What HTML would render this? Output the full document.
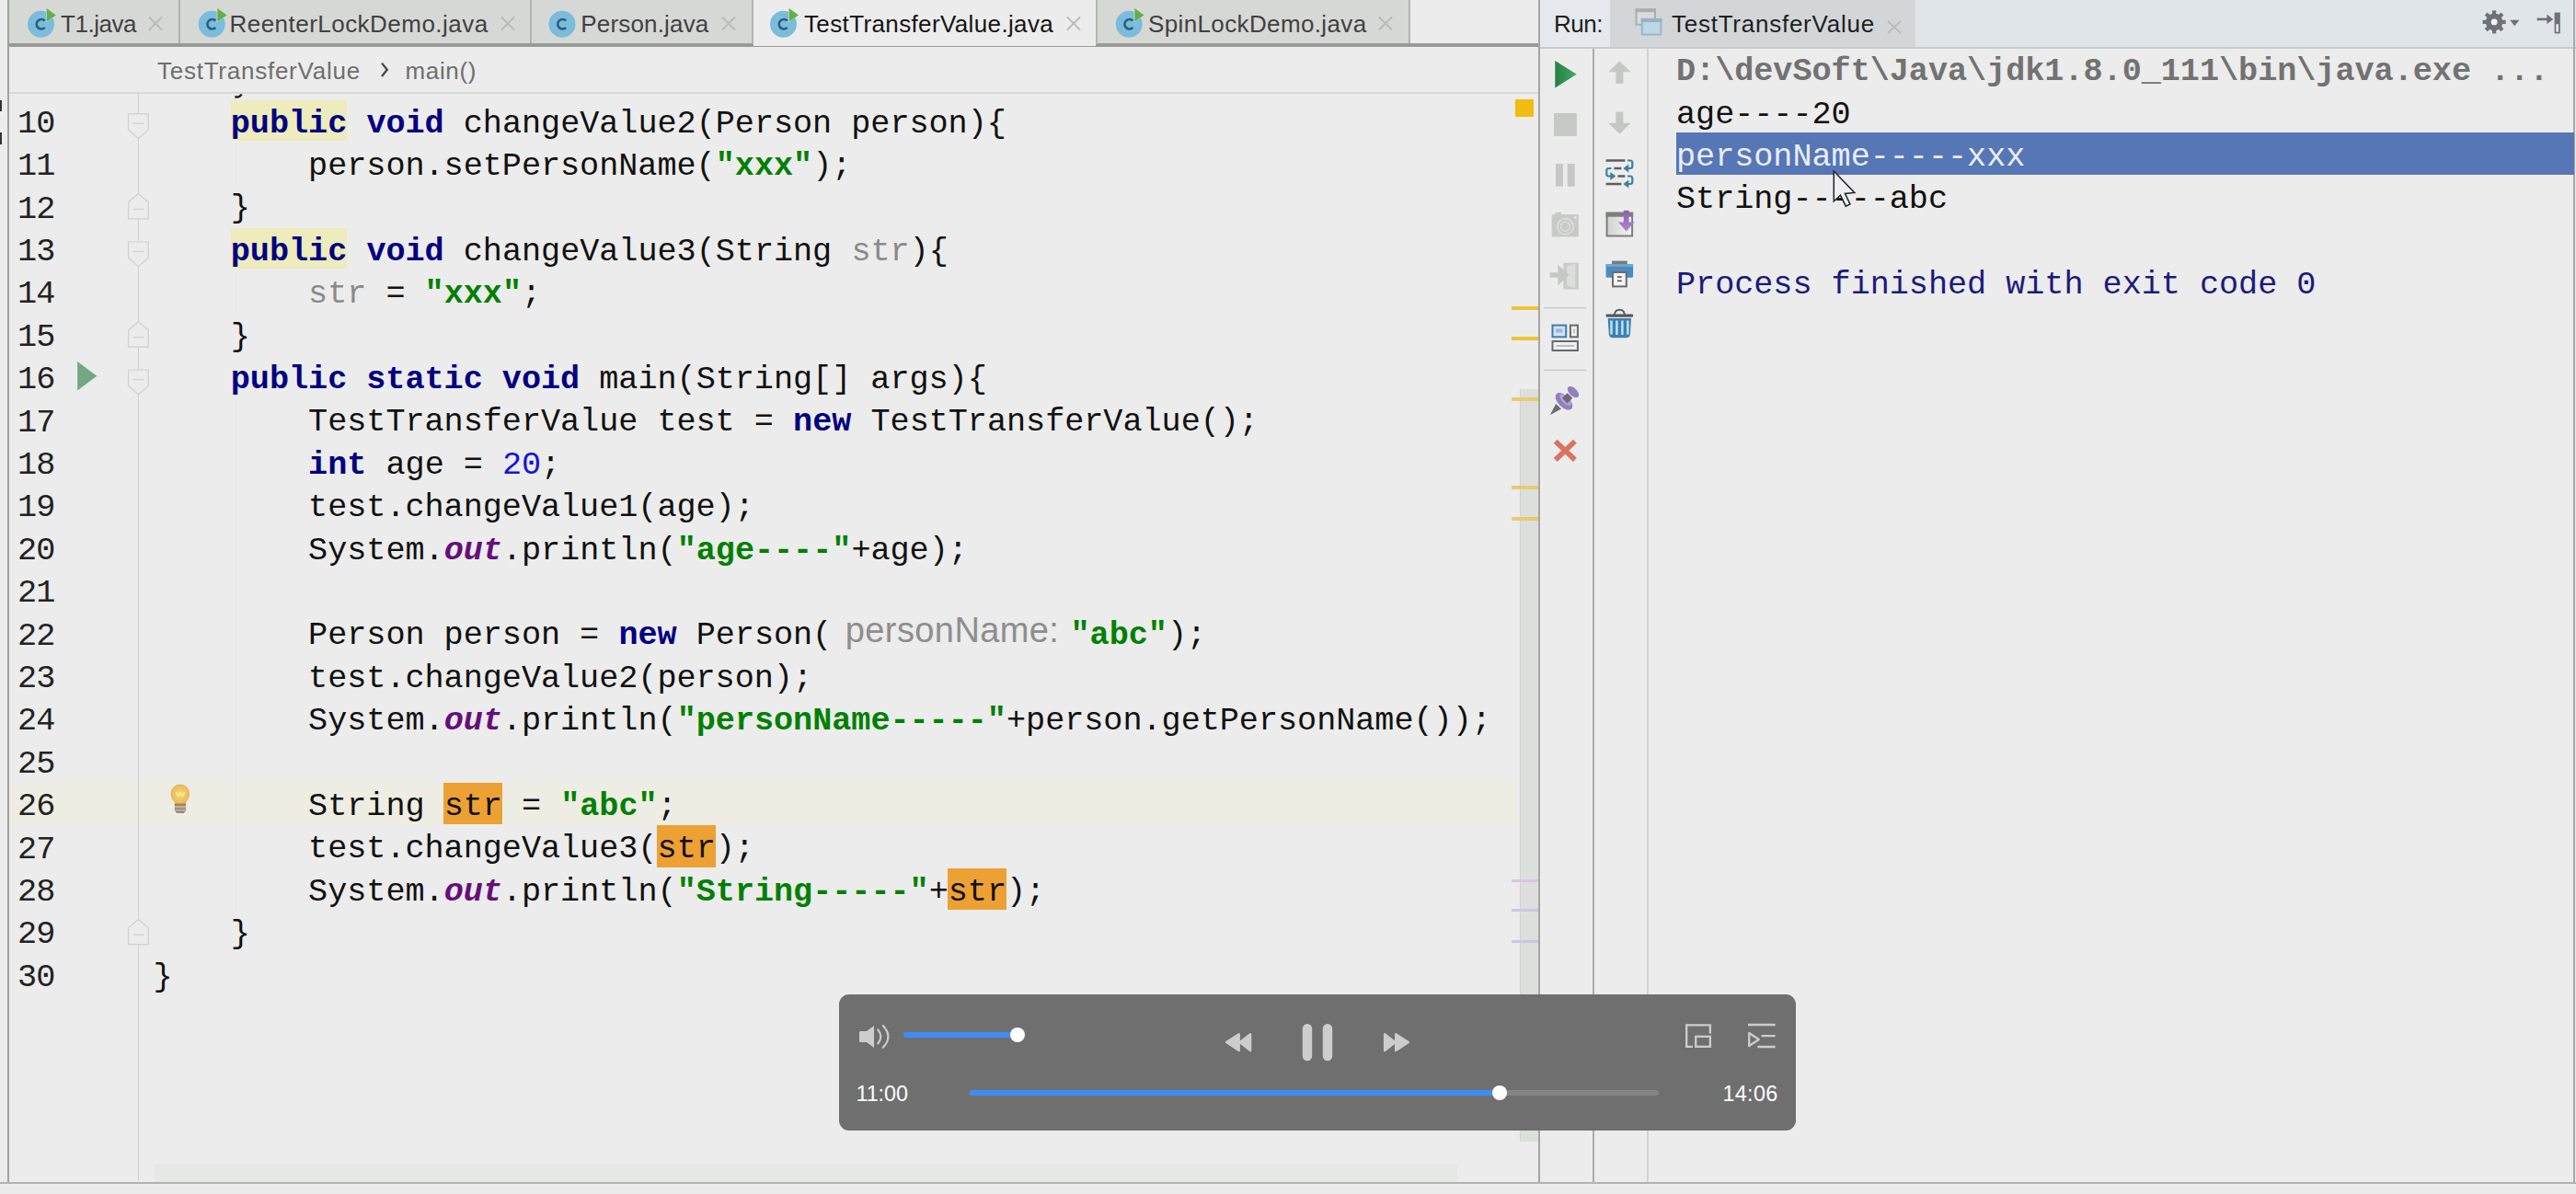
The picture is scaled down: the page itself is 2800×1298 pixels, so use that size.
<!DOCTYPE html>
<html><head><meta charset="utf-8"><title>TestTransferValue</title>
<style>
html,body{margin:0;padding:0;}
body{width:2800px;height:1298px;overflow:hidden;background:#ececec;position:relative;font-family:"Liberation Sans",sans-serif;}
.abs{position:absolute;}
.m{position:absolute;font-family:"Liberation Mono",monospace;font-size:35.2px;letter-spacing:-0.044px;white-space:pre;line-height:46.4px;height:46.4px;color:#111;}
.k{color:#000080;font-weight:bold;}
.s{color:#008000;font-weight:bold;}
.n{color:#1414d8;}
.f{color:#660e7a;font-weight:bold;font-style:italic;}
.u{color:#8a8a8a;}
.ui{font-family:"Liberation Sans",sans-serif;white-space:pre;position:absolute;}
</style></head><body>
<!-- ===== editor tab bar ===== -->
<div class="abs" style="left:10px;top:0;width:1663px;height:47px;background:#ececec;"></div>
<div class="abs" style="left:10px;top:0;width:807px;height:47px;background:#d6d8d6;"></div>
<div class="abs" style="left:1192px;top:0;width:340px;height:47px;background:#d6d8d6;"></div>
<!-- thick bottom border of tab bar -->
<div class="abs" style="left:10px;top:47px;width:1663px;height:4.300px;background:#989b98;"></div>
<!-- active tab cut -->
<div class="abs" style="left:819px;top:0;width:372px;height:49.5px;background:#ececec;"></div>
<div class="abs" style="left:817px;top:0;width:2px;height:48px;background:#b4b5b4;"></div>
<div class="abs" style="left:1191px;top:0;width:2px;height:48px;background:#b4b5b4;"></div>
<!-- tab separators -->
<div class="abs" style="left:193.5px;top:0;width:2px;height:47px;background:#b0b1b0;"></div>
<div class="abs" style="left:575.5px;top:0;width:2px;height:47px;background:#b0b1b0;"></div>
<div class="abs" style="left:1531px;top:0;width:2px;height:47px;background:#b0b1b0;"></div>
<!-- left window edge -->
<div class="abs" style="left:8px;top:0;width:2px;height:1286px;background:#a2a2a2;"></div>
<div class="abs" style="left:0;top:109px;width:2px;height:12px;background:#333;"></div>
<div class="abs" style="left:0;top:144px;width:2px;height:13px;background:#333;"></div>

<!-- tab labels -->
<div class="ui tabt" id="t1" style="left:66px;top:8.500px;font-size:26px;line-height:34px;color:#424040;letter-spacing:-0.450px;">T1.java</div>
<div class="ui tabt" id="t2" style="left:249.500px;top:8.500px;font-size:26px;line-height:34px;color:#424040;letter-spacing:0.470px;">ReenterLockDemo.java</div>
<div class="ui tabt" id="t3" style="left:631.300px;top:8.500px;font-size:26px;line-height:34px;color:#424040;letter-spacing:0.170px;">Person.java</div>
<div class="ui tabt" id="t4" style="left:874px;top:8.500px;font-size:26px;line-height:34px;color:#141414;letter-spacing:0.370px;">TestTransferValue.java</div>
<div class="ui tabt" id="t5" style="left:1248px;top:8.500px;font-size:26px;line-height:34px;color:#424040;letter-spacing:0.370px;">SpinLockDemo.java</div>

<!-- breadcrumb -->
<div class="abs" style="left:10px;top:100px;width:1662px;height:2px;background:#d7d9d6;"></div>
<div class="ui" id="bc1" style="left:171px;top:59.500px;letter-spacing:0.750px;font-size:26px;line-height:34px;color:#6e6e6e;">TestTransferValue</div>
<div class="ui" id="bc2" style="left:440.500px;top:59.500px;letter-spacing:0.660px;font-size:26px;line-height:34px;color:#6e6e6e;">main()</div>

<!-- editor right scrollbar / stripe -->
<div class="abs" style="left:1652px;top:423px;width:20px;height:818px;background:#dddfdd;border-left:1px solid #d0d2d0;box-sizing:border-box;"></div>
<div class="abs" style="left:1647px;top:108px;width:20px;height:19px;background:#f0bd10;"></div>
<div class="abs" style="left:1643px;top:332.5px;width:30px;height:4px;background:#ecc435;"></div>
<div class="abs" style="left:1643px;top:365.5px;width:30px;height:4px;background:#ecc435;"></div>
<div class="abs" style="left:1643px;top:431.5px;width:30px;height:4px;background:#e6cc6e;"></div>
<div class="abs" style="left:1643px;top:528px;width:30px;height:4px;background:#e6cc6e;"></div>
<div class="abs" style="left:1643px;top:561.5px;width:30px;height:4px;background:#e6cc6e;"></div>
<div class="abs" style="left:1643px;top:956px;width:30px;height:3px;background:#dcc4e4;"></div>
<div class="abs" style="left:1643px;top:988px;width:30px;height:3px;background:#cfc4e6;"></div>
<div class="abs" style="left:1643px;top:1022px;width:30px;height:3px;background:#cfc4e6;"></div>

<!-- horizontal scrollbar -->
<div class="abs" style="left:168px;top:1264.500px;width:1416px;height:20px;background:#e6e8e6;"></div>
<!-- bottom border -->
<div class="abs" style="left:0;top:1284.500px;width:2800px;height:2px;background:#b0b3b0;"></div>
<div class="abs" style="left:0;top:1286.500px;width:2800px;height:12px;background:#ebeceb;"></div>

<!-- ===== run panel ===== -->
<div class="abs" style="left:1674px;top:0;width:1126px;height:52px;background:#e0e5ea;"></div>
<div class="abs" style="left:1674px;top:0;width:76px;height:52px;background:#e5e9ed;"></div>
<div class="abs" style="left:1750px;top:0;width:332px;height:52px;background:#d2d6d8;"></div>
<div class="abs" style="left:1674px;top:51.200px;width:1126px;height:1.600px;background:#c9cccd;"></div>
<div class="abs" style="left:1671.500px;top:0;width:2.600px;height:1285px;background:#a3a6a3;"></div>
<div class="abs" style="left:1730.500px;top:53px;width:2.500px;height:1232px;background:#abaeab;"></div>
<div class="abs" style="left:1790px;top:53px;width:1.5px;height:1232px;background:#d2d2d2;"></div>
<div class="abs" style="left:2797.200px;top:0;width:2px;height:1285px;background:#a8a8a8;"></div>

<div class="ui" id="run" style="left:1689px;top:8.600px;letter-spacing:-0.500px;font-size:26px;line-height:34px;color:#1e1e1e;">Run:</div>
<div class="ui" id="runtab" style="left:1817px;top:9px;letter-spacing:0.750px;font-size:26px;line-height:34px;color:#1e1e1e;">TestTransferValue</div>
<!-- editor rows -->
<div class="abs" style="left:11px;top:850.7px;width:1640px;height:46.4px;background:#eeede3;"></div>
<div class="abs" style="left:149.6px;top:102px;width:1.5px;height:1182px;background:#d1d3d0;"></div>
<div class="abs" style="left:255.5px;top:154.7px;width:1px;height:46.4px;background:#e7e7e5;"></div>
<div class="abs" style="left:255.5px;top:293.9px;width:1px;height:46.4px;background:#e7e7e5;"></div>
<div class="abs" style="left:255.5px;top:433.1px;width:1px;height:556.8px;background:#e7e7e5;"></div>
<svg class="abs" style="left:0;top:0;" width="200" height="1298" viewBox="0 0 200 1298"><g fill="#ececec" stroke="#d2d4d2" stroke-width="1.4"><path d="M139.6 123.7 H161.2 V140.9 L150.4 150.7 L139.6 140.9 Z"/><path d="M144.4 134.3 H156.6"/><path d="M139.6 262.9 H161.2 V280.1 L150.4 289.9 L139.6 280.1 Z"/><path d="M144.4 273.5 H156.6"/><path d="M139.6 402.1 H161.2 V419.3 L150.4 429.1 L139.6 419.3 Z"/><path d="M144.4 412.7 H156.6"/><path d="M139.6 238.0 H161.2 V219.7 L150.4 210.7 L139.6 219.7 Z"/><path d="M144.4 227.4 H156.6"/><path d="M139.6 377.2 H161.2 V358.9 L150.4 349.9 L139.6 358.9 Z"/><path d="M144.4 366.6 H156.6"/><path d="M139.6 1026.8 H161.2 V1008.5 L150.4 999.5 L139.6 1008.5 Z"/><path d="M144.4 1016.2 H156.6"/></g></svg>
<div class="m" style="left:19.0px;top:111.8px;color:#222;letter-spacing:-0.84px;">10</div>
<div class="abs" style="left:251.0px;top:108.7px;width:126.1px;height:44.6px;background:#eeebbd;"></div>
<div class="m k" style="left:250.8px;top:111.5px;">public</div>
<div class="m k" style="left:398.4px;top:111.5px;">void</div>
<div class="m " style="left:503.8px;top:111.5px;">changeValue2(Person person){</div>
<div class="m" style="left:19.0px;top:158.2px;color:#222;letter-spacing:-0.84px;">11</div>
<div class="m " style="left:335.1px;top:157.9px;">person.setPersonName(</div>
<div class="m s" style="left:777.8px;top:157.9px;">"xxx"</div>
<div class="m " style="left:883.2px;top:157.9px;">);</div>
<div class="m" style="left:19.0px;top:204.6px;color:#222;letter-spacing:-0.84px;">12</div>
<div class="m " style="left:250.8px;top:204.3px;">}</div>
<div class="m" style="left:19.0px;top:251.0px;color:#222;letter-spacing:-0.84px;">13</div>
<div class="abs" style="left:251.0px;top:247.9px;width:126.1px;height:44.6px;background:#eeebbd;"></div>
<div class="m k" style="left:250.8px;top:250.7px;">public</div>
<div class="m k" style="left:398.4px;top:250.7px;">void</div>
<div class="m " style="left:503.8px;top:250.7px;">changeValue3(String </div>
<div class="m u" style="left:925.4px;top:250.7px;">str</div>
<div class="m " style="left:988.6px;top:250.7px;">){</div>
<div class="m" style="left:19.0px;top:297.4px;color:#222;letter-spacing:-0.84px;">14</div>
<div class="m u" style="left:335.1px;top:297.1px;">str</div>
<div class="m " style="left:419.5px;top:297.1px;">= </div>
<div class="m s" style="left:461.6px;top:297.1px;">"xxx"</div>
<div class="m " style="left:567.0px;top:297.1px;">;</div>
<div class="m" style="left:19.0px;top:343.8px;color:#222;letter-spacing:-0.84px;">15</div>
<div class="m " style="left:250.8px;top:343.5px;">}</div>
<div class="m" style="left:19.0px;top:390.2px;color:#222;letter-spacing:-0.84px;">16</div>
<div class="m k" style="left:250.8px;top:389.9px;">public static void</div>
<div class="m " style="left:651.3px;top:389.9px;">main(String[] args){</div>
<div class="m" style="left:19.0px;top:436.6px;color:#222;letter-spacing:-0.84px;">17</div>
<div class="m " style="left:335.1px;top:436.3px;">TestTransferValue test = </div>
<div class="m k" style="left:862.1px;top:436.3px;">new</div>
<div class="m " style="left:946.5px;top:436.3px;">TestTransferValue();</div>
<div class="m" style="left:19.0px;top:483.0px;color:#222;letter-spacing:-0.84px;">18</div>
<div class="m k" style="left:335.1px;top:482.7px;">int</div>
<div class="m " style="left:419.5px;top:482.7px;">age = </div>
<div class="m n" style="left:545.9px;top:482.7px;">20</div>
<div class="m " style="left:588.1px;top:482.7px;">;</div>
<div class="m" style="left:19.0px;top:529.4px;color:#222;letter-spacing:-0.84px;">19</div>
<div class="m " style="left:335.1px;top:529.1px;">test.changeValue1(age);</div>
<div class="m" style="left:19.0px;top:575.8px;color:#222;letter-spacing:-0.84px;">20</div>
<div class="m " style="left:335.1px;top:575.5px;">System.</div>
<div class="m f" style="left:482.7px;top:575.5px;">out</div>
<div class="m " style="left:545.9px;top:575.5px;">.println(</div>
<div class="m s" style="left:735.7px;top:575.5px;">"age----"</div>
<div class="m " style="left:925.4px;top:575.5px;">+age);</div>
<div class="m" style="left:19.0px;top:622.2px;color:#222;letter-spacing:-0.84px;">21</div>
<div class="m" style="left:19.0px;top:668.6px;color:#222;letter-spacing:-0.84px;">22</div>
<div class="m " style="left:335.1px;top:668.3px;">Person person = </div>
<div class="m k" style="left:672.4px;top:668.3px;">new</div>
<div class="m " style="left:756.7px;top:668.3px;">Person(</div>
<div class="m" style="left:19.0px;top:715.0px;color:#222;letter-spacing:-0.84px;">23</div>
<div class="m " style="left:335.1px;top:714.7px;">test.changeValue2(person);</div>
<div class="m" style="left:19.0px;top:761.4px;color:#222;letter-spacing:-0.84px;">24</div>
<div class="m " style="left:335.1px;top:761.1px;">System.</div>
<div class="m f" style="left:482.7px;top:761.1px;">out</div>
<div class="m " style="left:545.9px;top:761.1px;">.println(</div>
<div class="m s" style="left:735.7px;top:761.1px;">"personName-----"</div>
<div class="m " style="left:1094.0px;top:761.1px;">+person.getPersonName());</div>
<div class="m" style="left:19.0px;top:807.8px;color:#222;letter-spacing:-0.84px;">25</div>
<div class="m" style="left:19.0px;top:854.2px;color:#222;letter-spacing:-0.84px;">26</div>
<div class="m " style="left:335.1px;top:853.9px;">String </div>
<div class="abs" style="left:482.2px;top:850.7px;width:63.7px;height:45.8px;background:#eda134;"></div>
<div class="m " style="left:482.7px;top:853.9px;">str</div>
<div class="m " style="left:567.0px;top:853.9px;">= </div>
<div class="m s" style="left:609.2px;top:853.9px;">"abc"</div>
<div class="m " style="left:714.6px;top:853.9px;">;</div>
<div class="m" style="left:19.0px;top:900.6px;color:#222;letter-spacing:-0.84px;">27</div>
<div class="m " style="left:335.1px;top:900.3px;">test.changeValue3(</div>
<div class="abs" style="left:714.1px;top:897.1px;width:63.7px;height:45.8px;background:#eda134;"></div>
<div class="m " style="left:714.6px;top:900.3px;">str</div>
<div class="m " style="left:777.8px;top:900.3px;">);</div>
<div class="m" style="left:19.0px;top:947.0px;color:#222;letter-spacing:-0.84px;">28</div>
<div class="m " style="left:335.1px;top:946.7px;">System.</div>
<div class="m f" style="left:482.7px;top:946.7px;">out</div>
<div class="m " style="left:545.9px;top:946.7px;">.println(</div>
<div class="m s" style="left:735.7px;top:946.7px;">"String-----"</div>
<div class="m " style="left:1009.7px;top:946.7px;">+</div>
<div class="abs" style="left:1030.3px;top:943.5px;width:63.7px;height:45.8px;background:#eda134;"></div>
<div class="m " style="left:1030.8px;top:946.7px;">str</div>
<div class="m " style="left:1094.0px;top:946.7px;">);</div>
<div class="m" style="left:19.0px;top:993.4px;color:#222;letter-spacing:-0.84px;">29</div>
<div class="m " style="left:250.8px;top:993.1px;">}</div>
<div class="m" style="left:19.0px;top:1039.8px;color:#222;letter-spacing:-0.84px;">30</div>
<div class="m " style="left:166.5px;top:1039.5px;">}</div>
<!-- line 22 hint + string -->
<div class="ui" id="hint" style="left:918.800px;top:665.300px;font-size:38px;letter-spacing:0.400px;line-height:40px;color:#8e8e8e;">personName:</div>
<div class="m s" id="abc22" style="left:1163.500px;top:668.300px;">"abc"</div>
<div class="m" id="abc22b" style="left:1268.900px;top:668.300px;">);</div>
<!-- line 9 remnant -->
<svg class="abs" style="left:250px;top:100px;" width="18" height="10" viewBox="250 100 18 10"><path d="M255.300 105.300 Q258.500 105.700 260.300 104.800 Q262 103.900 262.600 102.600" fill="none" stroke="#2b2624" stroke-width="2.500" stroke-linecap="butt"/></svg>

<!-- ===== console ===== -->
<div class="abs" style="left:1821.800px;top:144.300px;width:976px;height:46px;background:#5776b6;"></div>
<div class="m" id="c1" style="left:1822px;top:55.100px;color:#727272;font-weight:bold;">D:\devSoft\Java\jdk1.8.0_111\bin\java.exe ...</div>
<div class="m" id="c2" style="left:1822px;top:101.500px;">age----20</div>
<div class="m" id="c3" style="left:1822px;top:147.900px;color:#e8eef8;">personName-----xxx</div>
<div class="m" id="c4" style="left:1822px;top:194.300px;">String-----abc</div>
<div class="m" id="c6" style="left:1822px;top:287.100px;color:#1b1b7c;">Process finished with exit code 0</div>

<!-- ===== video player overlay ===== -->
<div class="abs" id="player" style="left:912px;top:1081px;width:1040px;height:148px;background:#6f6f6f;border-radius:11px;"></div>
<!-- volume slider -->
<div class="abs" style="left:982px;top:1122px;width:124px;height:6px;border-radius:3px;background:#3c8ef6;"></div>
<div class="abs" style="left:1097.5px;top:1117px;width:16px;height:16px;border-radius:8px;background:#fff;"></div>
<!-- progress -->
<div class="abs" style="left:1054px;top:1185px;width:749px;height:6px;border-radius:3px;background:#858585;"></div>
<div class="abs" style="left:1054px;top:1185px;width:576px;height:6px;border-radius:3px;background:#3c8ef6;"></div>
<div class="abs" style="left:1622px;top:1180px;width:16px;height:16px;border-radius:8px;background:#fff;"></div>
<div class="ui" id="tm1" style="left:930.500px;top:1174px;letter-spacing:-0.100px;font-size:23.400px;line-height:30px;color:#fff;">11:00</div>
<div class="ui" id="tm2" style="left:1872.500px;top:1174px;letter-spacing:0.300px;font-size:23.400px;line-height:30px;color:#fff;">14:06</div>
<!-- transport icons -->
<svg class="abs" style="left:1320px;top:1100px;" width="230" height="70" viewBox="1320 1100 230 70">
  <g fill="#cdcdcd" stroke="#cdcdcd" stroke-width="2.400" stroke-linejoin="round">
    <path d="M1333 1133.100 L1346.700 1124.200 L1346.700 1142 Z"/>
    <path d="M1347.600 1133.100 L1359.100 1124.200 L1359.100 1142 Z"/>
    <path d="M1505.100 1124.200 L1505.100 1142 L1516.600 1133.100 Z"/>
    <path d="M1517.200 1124.200 L1517.200 1142 L1530.900 1133.100 Z"/>
  </g>
  <g fill="#cdcdcd">
    <rect x="1415.800" y="1113" width="10.400" height="40.300" rx="5.200"/>
    <rect x="1437.800" y="1113" width="10.400" height="40.300" rx="5.200"/>
  </g>
</svg>
<!-- speaker -->
<svg class="abs" style="left:930px;top:1108px;" width="42" height="38" viewBox="930 1108 42 38">
  <path d="M934 1122.200 Q934 1121 935.200 1121 L942 1121 L950 1115 L950 1139 L942 1133 L935.200 1133 Q934 1133 934 1131.800 Z" fill="#cdcdcd"/>
  <path d="M954.300 1119.300 Q960.300 1127 954.300 1134.500" fill="none" stroke="#cdcdcd" stroke-width="2.100" stroke-linecap="round"/>
  <path d="M959.800 1115 Q971 1127 959.800 1138.800" fill="none" stroke="#cdcdcd" stroke-width="2.100" stroke-linecap="round"/>
</svg>
<!-- pip + playlist -->
<svg class="abs" style="left:1825px;top:1108px;" width="112" height="38" viewBox="1825 1108 112 38">
  <g fill="none" stroke="#cdcdcd" stroke-width="2.300">
    <path d="M1840 1137.800 L1833.200 1137.800 L1833.200 1114.300 L1858.900 1114.300 L1858.900 1123.500"/>
    <rect x="1843.200" y="1126.800" width="15.700" height="11"/>
    <path d="M1900 1114 L1929.600 1114 M1914.600 1126.200 L1929.600 1126.200 M1910.500 1138 L1929.600 1138"/>
    <path d="M1901.200 1123 L1911.800 1130 L1901.200 1137 Z" stroke-linejoin="round"/>
  </g>
</svg>
<!-- ===== run toolbar icons (absolute coords via one big svg) ===== -->
<svg class="abs" style="left:1674px;top:52px;" width="126" height="480" viewBox="1674 52 126 480">
  <defs>
    <linearGradient id="gplay" x1="0" y1="0" x2="1" y2="0"><stop offset="0" stop-color="#257f43"/><stop offset="1" stop-color="#3fae63"/></linearGradient>
    <linearGradient id="gpur" x1="0" y1="0" x2="0" y2="1"><stop offset="0" stop-color="#8a5fae"/><stop offset="1" stop-color="#b487cf"/></linearGradient>
    <linearGradient id="gwin" x1="0" y1="0" x2="1" y2="0"><stop offset="0" stop-color="#cfd1cf"/><stop offset="1" stop-color="#f4f4f4"/></linearGradient>
  </defs>
  <!-- col 1 -->
  <path d="M1690.3 66 L1713.8 80.800 L1690.3 95.600 Z" fill="url(#gplay)"/>
  <rect x="1689" y="123" width="24.800" height="25" fill="#c6c8c6"/>
  <rect x="1691" y="178" width="8" height="24.700" fill="#c6c8c6"/>
  <rect x="1703.700" y="178" width="8" height="24.700" fill="#c6c8c6"/>
  <!-- camera -->
  <path d="M1686.700 233 L1690.500 233 L1690.500 230.700 L1697 230.700 L1697 233 L1715.800 233 L1715.800 257.500 L1686.700 257.500 Z" fill="#c8cac8"/>
  <circle cx="1701.500" cy="246.200" r="8.600" fill="none" stroke="#dededc" stroke-width="1.600"/>
  <circle cx="1701.500" cy="246.200" r="5" fill="none" stroke="#dededc" stroke-width="1.400"/>
  <circle cx="1712.300" cy="236.500" r="1.300" fill="#eeeeee"/>
  <!-- exit -->
  <rect x="1699.400" y="285.700" width="16.400" height="28.800" fill="#c9cbc9"/>
  <path d="M1703 289.500 L1712.300 286.500 L1712.300 313.500 L1703 310.500 Z" fill="#dcdedc"/>
  <path d="M1684.700 296.200 L1693.400 296.200 L1693.400 287.700 L1705.500 299 L1693.400 310.400 L1693.400 301.800 L1684.700 301.800 Z" fill="#c6c8c6"/>
  <!-- separators -->
  <rect x="1678" y="334" width="46.200" height="1.500" fill="#c9cbc9"/>
  <rect x="1678" y="401.700" width="46.200" height="1.500" fill="#c9cbc9"/>
  <!-- layout -->
  <rect x="1687.500" y="353.600" width="14.700" height="12.700" fill="#cfe4f4" stroke="#3f7dac" stroke-width="2"/>
  <rect x="1691" y="357.500" width="7.500" height="4" fill="#9fb6d8"/>
  <rect x="1706.900" y="353.600" width="8" height="12.700" fill="#f2f2f2" stroke="#666a6c" stroke-width="2"/>
  <rect x="1709.700" y="357.500" width="2.400" height="5" fill="#c8c8c8"/>
  <rect x="1687.500" y="371" width="27.400" height="10" fill="#f0f0f0" stroke="#666a6c" stroke-width="2"/>
  <rect x="1691.500" y="375" width="19.500" height="2" fill="#bdbdbd"/>
  <!-- pin -->
  <path d="M1684.700 451.300 L1691.200 439 L1697 444.500 Z" fill="#6c6c6e"/>
  <ellipse cx="1700" cy="436.300" rx="11.500" ry="6.300" transform="rotate(45 1700 436.300)" fill="#9280bd"/>
  <ellipse cx="1701.600" cy="434.700" rx="8" ry="3.600" transform="rotate(45 1701.600 434.700)" fill="#b3a4d4"/>
  <rect x="1699.600" y="428.800" width="8" height="8" transform="rotate(45 1703.600 432.800)" fill="#6b6878"/>
  <ellipse cx="1710" cy="426.200" rx="7.600" ry="4.200" transform="rotate(45 1710 426.200)" fill="#927fbd"/>
  <!-- X -->
  <path d="M1690.700 479.800 L1711.900 499.900 M1711.900 479.800 L1690.700 499.900" stroke="#d9735f" stroke-width="5.600" stroke-linecap="butt" fill="none"/>

  <!-- col 2 -->
  <path d="M1760.400 66.500 L1772.600 78.200 L1764.400 78.200 L1764.400 91.100 L1756.400 91.100 L1756.400 78.200 L1748.200 78.200 Z" fill="#c5c7c5"/>
  <path d="M1760.400 145.700 L1772.600 133.700 L1764.400 133.700 L1764.400 121.400 L1756.400 121.400 L1756.400 133.700 L1748.200 133.700 Z" fill="#c5c7c5"/>
  <!-- soft wrap -->
  <g stroke="#5c5c5c" stroke-width="2.500" fill="none">
    <path d="M1745.600 174.500 L1766.400 174.500"/>
    <path d="M1754.400 183 L1762.400 183"/>
    <path d="M1758.400 191.500 L1766.400 191.500"/>
    <path d="M1745.600 200 L1762.400 200"/>
  </g>
  <g stroke="#3d7ea6" stroke-width="2.200" fill="none">
    <path d="M1769 174.500 L1772 174.500 Q1774.300 174.500 1774.300 177 L1774.300 180.500 Q1774.300 183 1772 183 L1769 183"/>
    <path d="M1769 191.500 L1772 191.500 Q1774.300 191.500 1774.300 194 L1774.300 197.500 Q1774.300 200 1772 200 L1769 200"/>
    <path d="M1751.500 183 L1748.500 183 Q1746.300 183 1746.300 185.500 L1746.300 189 Q1746.300 191.500 1748.500 191.500 L1751.500 191.500"/>
  </g>
  <g fill="#3d7ea6">
    <path d="M1764.300 183 L1770.300 178.600 L1770.300 187.400 Z"/>
    <path d="M1764.300 200 L1770.300 195.600 L1770.300 204.400 Z"/>
    <path d="M1756.300 191.500 L1750.300 187.100 L1750.300 195.900 Z"/>
  </g>
  <!-- scroll to end -->
  <rect x="1746.600" y="231.700" width="27.500" height="24.800" fill="url(#gwin)" stroke="#7c7e7c" stroke-width="2"/>
  <rect x="1745.600" y="230.700" width="29.500" height="5" fill="#7c7e7c"/>
  <path d="M1764.800 228.700 L1770.600 228.700 L1770.600 241.500 L1776.500 241.500 L1767.700 251.500 L1759 241.500 L1764.800 241.500 Z" fill="url(#gpur)"/>
  <!-- printer -->
  <rect x="1752" y="283.600" width="16.800" height="4" fill="#7a7c7a"/>
  <rect x="1745.600" y="287" width="29.500" height="14.700" rx="1.500" fill="#4a8cc0"/>
  <rect x="1745.600" y="287" width="29.500" height="3" fill="#6aa6d4"/>
  <rect x="1753" y="296" width="14.800" height="15.400" fill="#f4f4f4" stroke="#6a6c6a" stroke-width="2"/>
  <rect x="1758" y="300.300" width="4.800" height="1.600" fill="#555"/>
  <rect x="1758" y="304.500" width="4.800" height="1.600" fill="#555"/>
  <!-- trash -->
  <path d="M1754.900 342 Q1755.500 336.800 1760.400 336.800 Q1765.300 336.800 1765.900 342" fill="none" stroke="#5a5c5e" stroke-width="2"/>
  <rect x="1745.600" y="341.500" width="29.500" height="3.200" rx="1" fill="#55585a"/>
  <path d="M1747.700 346 L1773.100 346 L1772 363 Q1771.600 367.300 1767.500 367.300 L1753.300 367.300 Q1749.200 367.300 1748.800 363 Z" fill="#3f7fb2"/>
  <g fill="#bfe6f6">
    <rect x="1750.300" y="348.500" width="2.400" height="15"/>
    <rect x="1756.200" y="348.500" width="2.400" height="15.500"/>
    <rect x="1762.200" y="348.500" width="2.400" height="15.500"/>
    <rect x="1768.100" y="348.500" width="2.400" height="15"/>
  </g>
</svg>

<!-- run tab icon -->
<svg class="abs" style="left:1774px;top:6px;" width="38" height="36" viewBox="1774 6 38 36">
  <rect x="1778.500" y="10.400" width="20.500" height="16.300" fill="#d9dcdd" stroke="#aaaeb1" stroke-width="2"/>
  <rect x="1777.500" y="9.400" width="22.500" height="3.800" fill="#aaaeb1"/>
  <rect x="1784.800" y="20.900" width="20.600" height="16.600" fill="#bdd7e7" stroke="#9cb5c6" stroke-width="2"/>
  <rect x="1783.800" y="19.900" width="22.600" height="4.200" fill="#98b2c4"/>
</svg>
<!-- gear + hide -->
<svg class="abs" style="left:2690px;top:6px;" width="104" height="40" viewBox="2690 6 104 40">
  <g fill="#6e7278">
    <g transform="translate(2711.100 23.900)">
      <circle r="9.300"/>
      <rect x="-2.100" y="-12.500" width="4.200" height="25"/>
      <rect x="-2.100" y="-12.500" width="4.200" height="25" transform="rotate(45)"/>
      <rect x="-2.100" y="-12.500" width="4.200" height="25" transform="rotate(90)"/>
      <rect x="-2.100" y="-12.500" width="4.200" height="25" transform="rotate(135)"/>
      <circle r="3.400" fill="#f2f4f8"/>
    </g>
    <path d="M2728.200 21.700 L2738.400 21.700 L2733.300 28.300 Z"/>
    <rect x="2757.600" y="19.600" width="12" height="2.600"/>
    <path d="M2768.400 15.600 L2775.200 20.900 L2768.400 26.200 Z"/>
    <rect x="2776.600" y="13.600" width="6.200" height="22.800"/>
    <rect x="2778.300" y="26.200" width="2.700" height="8.500" fill="#e4e8ec"/>
  </g>
</svg>
<!-- tab close x's -->
<svg class="abs" style="left:0;top:0;" width="2100" height="48" viewBox="0 0 2100 48">
  <g stroke="#b9bbb9" stroke-width="1.800" fill="none">
    <path d="M162 18.500 L176 32.500 M176 18.500 L162 32.500"/>
    <path d="M545 18.500 L559 32.500 M559 18.500 L545 32.500"/>
    <path d="M785 18.500 L799 32.500 M799 18.500 L785 32.500"/>
    <path d="M1160 18.500 L1174 32.500 M1174 18.500 L1160 32.500"/>
    <path d="M1499 18.500 L1513 32.500 M1513 18.500 L1499 32.500"/>
    <path d="M2052 23 L2066 36 M2066 23 L2052 36"/>
  </g>
</svg>
<!-- class icons in tabs -->
<svg class="abs" style="left:0;top:0;" width="1300" height="46" viewBox="0 0 1300 46">
  <defs>
    <g id="cls">
      <circle cx="0" cy="0" r="14.500" fill="#7bbcdc"/>
      <path d="M4.200 -3.700 A5.300 5.200 0 1 0 4.200 3.900" fill="none" stroke="#2b5f7e" stroke-width="2.700"/>
    </g>
    <g id="clsrun">
      <use href="#cls"/>
      <path d="M5.500 -17.800 L17 -9.800 L5.500 -2 Z" fill="#d9dcd6"/>
      <path d="M6.200 -17.200 L16.400 -9.700 L6.200 -2.700 Z" fill="#62b04a"/>
    </g>
  </defs>
  <use href="#clsrun" x="44.500" y="26.200"/>
  <use href="#clsrun" x="230.200" y="26.200"/>
  <use href="#cls" x="611" y="26.200"/>
  <use href="#clsrun" x="851.500" y="26.200"/>
  <use href="#clsrun" x="1227.200" y="26.200"/>
</svg>
<!-- breadcrumb chevron -->
<svg class="abs" style="left:408px;top:62px;" width="20" height="28" viewBox="408 62 20 28">
  <path d="M415 68.600 L420.800 75.800 L415 83" fill="none" stroke="#484848" stroke-width="2.300"/>
</svg>
<!-- gutter run arrow (line 16) -->
<svg class="abs" style="left:80px;top:388px;" width="30" height="42" viewBox="80 388 30 42">
  <path d="M84.200 393 L105.400 408.700 L84.200 424.500 Z" fill="#74a884"/>
</svg>
<!-- lightbulb -->
<svg class="abs" style="left:180px;top:848px;" width="32" height="40" viewBox="180 848 32 40">
  <defs><radialGradient id="gb" cx="0.5" cy="0.5" r="0.6"><stop offset="0" stop-color="#f2dc72"/><stop offset="0.600" stop-color="#eec060"/><stop offset="1" stop-color="#e4b060"/></radialGradient></defs>
  <path d="M185.500 862.900 A10.300 10.300 0 1 1 206.100 862.900 Q206.100 868 202.100 872 L202.100 874 L189.800 874 L189.800 872 Q185.500 868 185.500 862.900 Z" fill="url(#gb)"/>
  <path d="M191 861 L193.500 865.500 L196 861.500 L198.500 865.500 L201 861" fill="none" stroke="#f3ec8a" stroke-width="1.600"/>
  <rect x="189.800" y="873.600" width="12.300" height="2.600" fill="#a38553"/>
  <rect x="189.800" y="876.200" width="12.300" height="2" fill="#b9ab9a"/>
  <rect x="189.800" y="878.200" width="12.300" height="2" fill="#978b7c"/>
  <rect x="189.800" y="880.200" width="12.300" height="1.600" fill="#b3a99b"/>
  <path d="M190.500 881.800 L201.400 881.800 L200 883.900 L192 883.900 Z" fill="#958a7c"/>
</svg>
<!-- mouse cursor -->
<svg class="abs" style="left:1988px;top:180px;" width="36" height="50" viewBox="1988 180 36 50">
  <path d="M1993.300 186 L1993.300 218.800 L2000.500 212.300 L2006.300 224.200 L2011 222 L2005.400 210.400 L2015.800 209.500 Z" fill="#f0f0f0" fill-opacity="0.940" stroke="#20242c" stroke-width="1.500" stroke-linejoin="miter"/>
</svg>
</body></html>
